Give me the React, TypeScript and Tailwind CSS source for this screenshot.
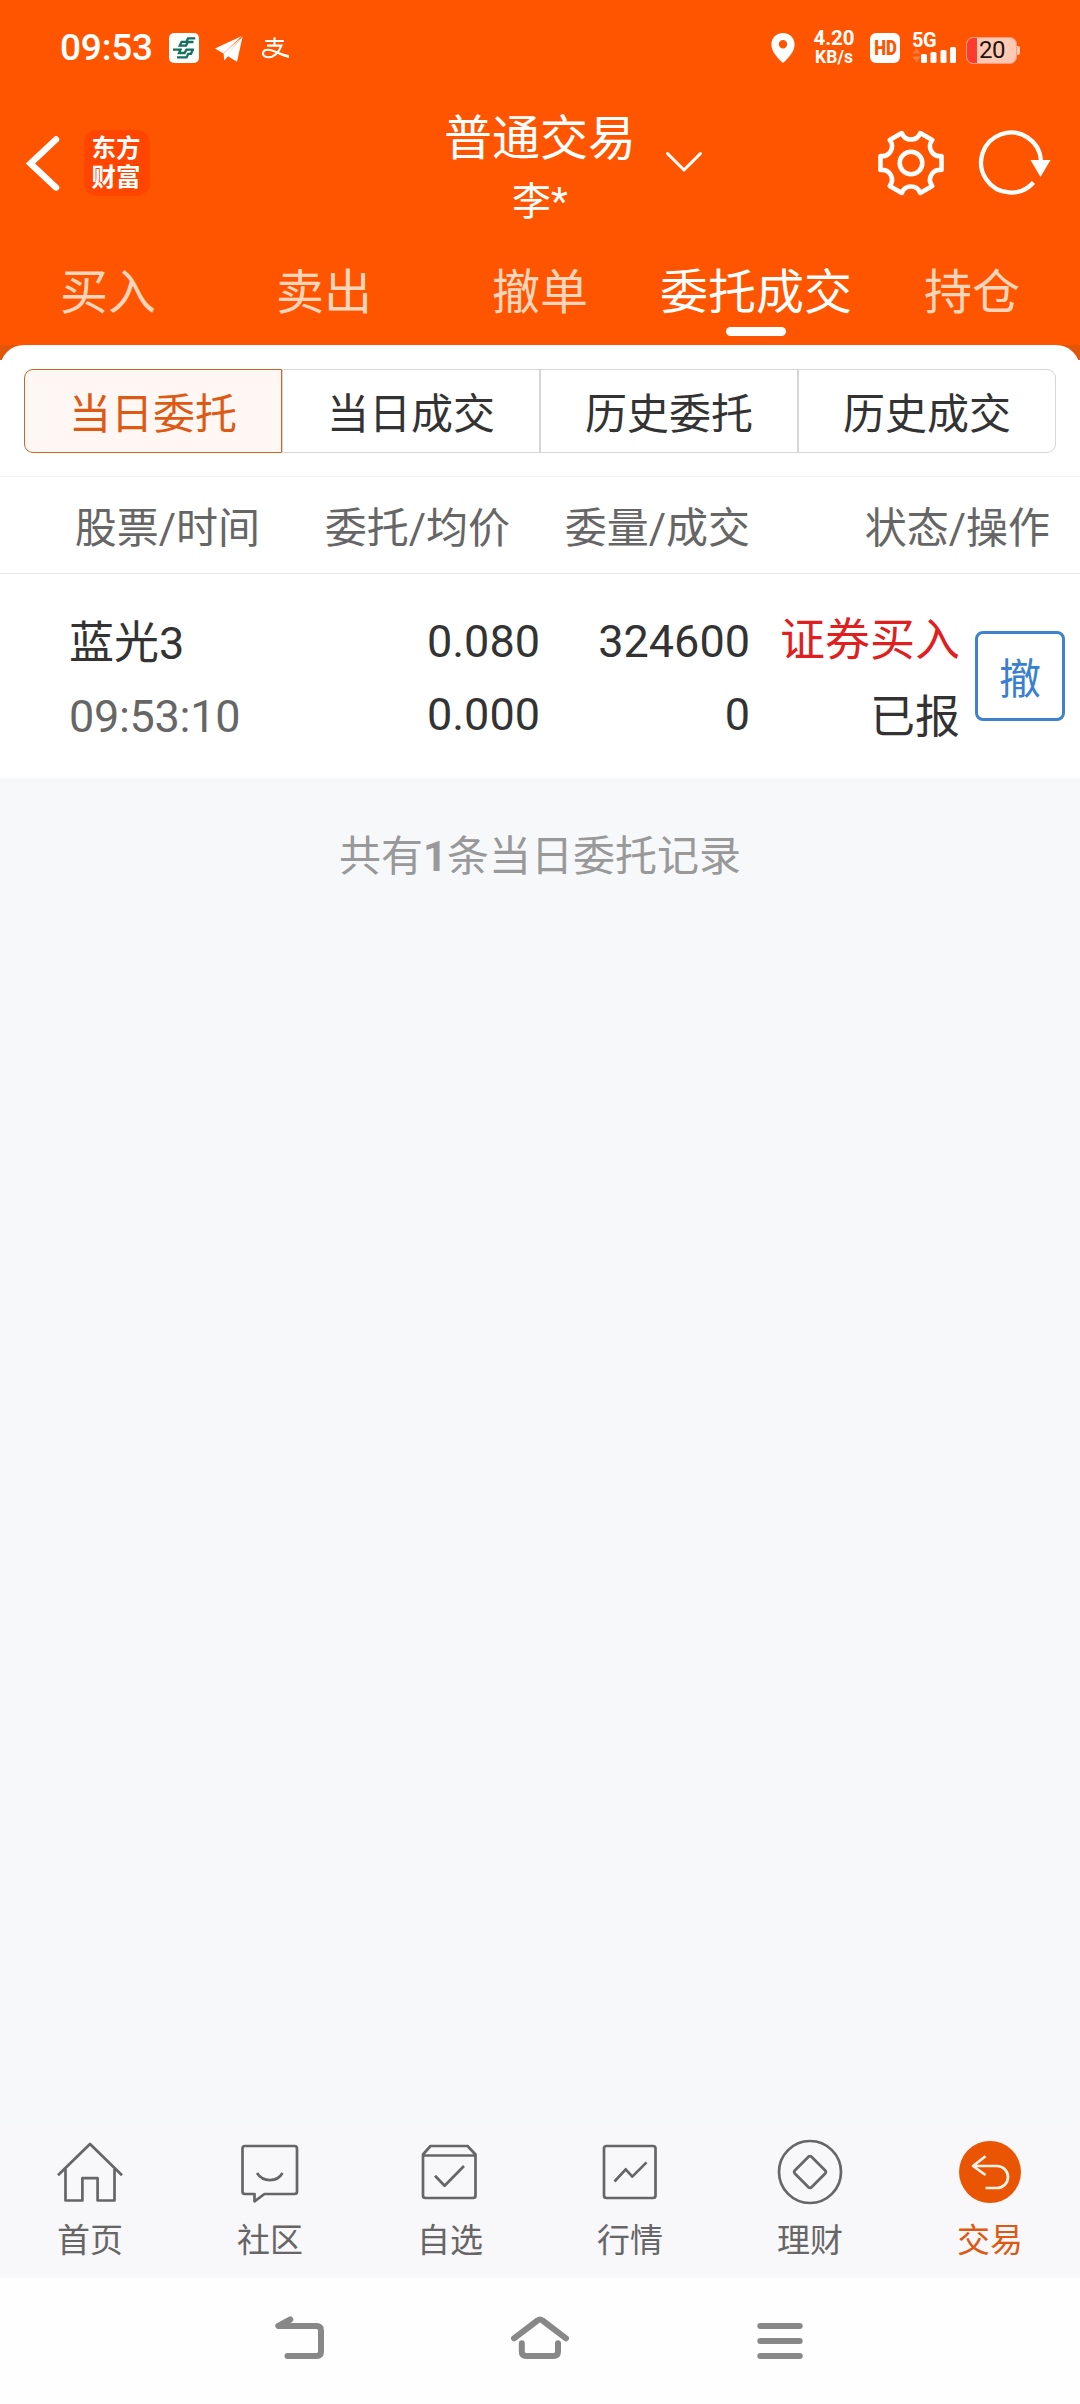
import React from "react";

const FONT = "font-['Roboto','Noto_Sans_CJK_SC',sans-serif]";

function PostLogo() {
  return (
    <svg width="30" height="30" viewBox="0 0 30 30" className="ml-[15px]">
      <rect width="30" height="30" rx="5" fill="#fff" />
      <g fill="none" stroke="#12705c" strokeWidth="2.3">
        <path d="M26.2 5.4H19L17.400 8.800H12.600L10.800 12.600H17L18.800 9H24.500" />
        <path d="M4 16.600H11.500L10 20H15.600L17.400 16.600H25" />
        <path d="M8 24.400H17.600L19.200 20.800H22L23.600 17" />
      </g>
    </svg>
  );
}

function PlaneIcon() {
  return (
    <svg width="30" height="30" viewBox="0 0 30 30" className="ml-[15px]" fill="#fff">
      <path d="M1 15.5L27.8 3 9.5 20.5Z" />
      <path d="M28.6 3.4L23 28.8 14 23.2 10.3 27.5 9.6 20.6 26.5 5.2 13 22Z" />
    </svg>
  );
}

function AlipayIcon() {
  return (
    <svg
      width="30"
      height="30"
      viewBox="0 0 30 30"
      className="ml-[16px]"
      fill="none"
      stroke="#fff"
      strokeWidth="2.1"
    >
      <path d="M5.2 8h18.6M14.5 4.2v8.6M7 12.6h14.4c-1.8 4.6-5.7 11.600-13 11.600-3.400 0-5.400-1.600-5.400-3.700 0-2.200 2.100-3.700 5-3.700 5.600 0 10.300 4.500 20.700 6.200" />
      <path d="M17 18.300c4 2 7.500 3.400 12 4.400v2.200c-5-1-10-3.500-13.500-5.500z" fill="#fff" stroke="none" />
    </svg>
  );
}

function StatusBar() {
  return (
    <div className="flex h-24 items-center pl-[60px] pr-[60px] text-white">
      <span className="w-[94px] text-[37px] font-medium leading-[36px] tracking-[-0.2px]">09:53</span>
      <PostLogo />
      <PlaneIcon />
      <AlipayIcon />
      <div className="flex-1" />
      <svg width="24" height="30" viewBox="0 0 24 30">
        <path
          fillRule="evenodd"
          fill="#fff"
          d="M12 0C5.200 0 .4 5.100.4 11.500.4 18.500 6 24.500 12 30c6-5.500 11.600-11.500 11.600-18.500C23.600 5.100 18.800 0 12 0Zm0 7a4.200 4.200 0 1 1 0 8.400A4.200 4.200 0 0 1 12 7Z"
        />
      </svg>
      <div className="ml-[17px] flex w-[44px] flex-col items-center font-bold">
        <span className="text-[20.5px] leading-[19px]">4.20</span>
        <span className="text-[17.5px] leading-[19px]">KB/s</span>
      </div>
      <div className="ml-[14px] flex h-[30px] w-[30px] items-center justify-center rounded-[6px] bg-white text-[20px] font-black leading-none text-[#ff5500]">
        <span className="inline-block scale-x-[0.84]">HD</span>
      </div>
      <div className="ml-[12px] flex h-[30px] w-[46px] flex-col">
        <span className="h-[14px] text-[20px] font-bold leading-[15px] tracking-[-0.5px]">5G</span>
        <svg width="46" height="18" viewBox="0 0 46 18" className="shrink-0" fill="#fff">
          <path d="M0 6.500L4.500 1.500 9 6.500ZM0 9.500L4.500 15 9 9.500Z" fill="#ff7a3c" />
          <rect x="9" y="7" width="6" height="9" rx="1.5" />
          <rect x="18.500" y="5" width="6" height="11" rx="1.5" />
          <rect x="28.500" y="3" width="6" height="13" rx="1.5" />
          <rect x="38" y="0" width="6" height="16" rx="1.5" />
        </svg>
      </div>
      <div className="ml-[8px] mt-[4px] flex items-center">
        <div className="flex h-[27px] w-[51px] items-center overflow-hidden rounded-[7px] border border-[#ff9a80] bg-[#ffc9b3]">
          <div className="h-full w-[10px] bg-[#ff3b30]" />
          <span className="ml-[2px] text-[24px] leading-[27px] tracking-[-0.5px] text-[#1c1410]">20</span>
        </div>
        <div className="h-[9px] w-[3px] rounded-r-[2px] bg-[#ffc9b3]" />
      </div>
    </div>
  );
}

function TitleBar() {
  return (
    <div className="flex h-[134px] pl-[24px] pr-[27px] text-white">
      <div className="flex w-[420px] pt-[34px]">
        <svg width="40" height="66" viewBox="0 0 40 66" fill="none" stroke="#fff" strokeWidth="6.500">
          <path d="M32 9.500L6.500 33.500 32 57.500" strokeLinecap="round" />
        </svg>
        <div className="ml-[20px] flex h-[66px] w-[66px] flex-col items-center justify-center rounded-[13px] bg-[#ff4500] pr-[2px] text-[24.5px] font-bold leading-[29px]">
          <span>东方</span>
          <span>财富</span>
        </div>
      </div>
      <div className="flex w-[192px] flex-col items-center pt-[14px]">
        <span className="whitespace-nowrap text-[48px] leading-[58px]">普通交易</span>
        <span className="mt-[11px] text-[39px] leading-[46px]">李*</span>
      </div>
      <svg
        width="40"
        height="24"
        viewBox="0 0 40 24"
        className="ml-[28px] mt-[53px]"
        fill="none"
        stroke="#fff"
        strokeWidth="3"
        strokeLinecap="round"
      >
        <path d="M3.500 4.500L20 21 36.500 4.500" />
      </svg>
      <div className="flex-1" />
      <svg
        width="68"
        height="68"
        viewBox="-34 -34 68 68"
        className="mt-[33px]"
        fill="none"
        stroke="#fff"
        strokeWidth="4.600"
        strokeLinejoin="round"
      >
        <path d="M30.500 -7V7A9.800 9.800 0 0 0 21.300 22.900L9.200 29.900A9.800 9.800 0 0 0 -9.200 29.900L-21.300 22.900A9.800 9.800 0 0 0 -30.500 7V-7A9.800 9.800 0 0 0 -21.300 -22.900L-9.200 -29.900A9.800 9.800 0 0 0 9.200 -29.900L21.300 -22.900A9.800 9.800 0 0 0 30.500 -7Z" />
        <circle r="11.300" />
      </svg>
      <svg width="76" height="68" viewBox="-34 -34 76 68" className="ml-[32px] mt-[33px]">
        <path d="M30 -3A30 30 0 1 0 22.500 19.500" fill="none" stroke="#fff" strokeWidth="4.300" />
        <path d="M19.500 -3H39.500L29.500 14Z" fill="#fff" />
      </svg>
    </div>
  );
}

const tabs = ["买入", "卖出", "撤单", "委托成交", "持仓"];

function MainTabs() {
  return (
    <div className="flex h-[115px]">
      {tabs.map((tab) => {
        const active = tab === "委托成交";
        return (
          <div key={tab} className="flex w-[216px] flex-col items-center pt-[33px]">
            <span className={`text-[48px] leading-[60px] ${active ? "text-white" : "text-[#ffd5bc]"}`}>{tab}</span>
            {active && <div className="mt-[4px] h-[9px] w-[60px] rounded-[5px] bg-white" />}
          </div>
        );
      })}
    </div>
  );
}

const segments = ["当日委托", "当日成交", "历史委托", "历史成交"];

function Segments() {
  return (
    <div className="flex h-[117px] border-b border-[#f2f2f3] bg-white px-6 pt-[9px]">
      {segments.map((s, i) => (
        <div
          key={s}
          className={`flex h-[84px] w-[258px] items-center justify-center border pt-[7px] text-[42px] leading-[50px] ${
            i === 0
              ? "rounded-l-[9px] border-[#cd6428] bg-[#fff7f3] text-[#dd5a14]"
              : "border-[#d4d6d8] bg-white text-[#333333]"
          } ${i === 3 ? "rounded-r-[9px]" : ""}`}
        >
          {s}
        </div>
      ))}
    </div>
  );
}

function TableHead() {
  return (
    <div className="flex h-[97px] items-center border-b border-[#e9e9ea] bg-white pt-[7px] text-right text-[42px] leading-[50px] text-[#666666]">
      <div className="w-[260px]">股票/时间</div>
      <div className="w-[250px]">委托/均价</div>
      <div className="w-[240px]">委量/成交</div>
      <div className="w-[300px]">状态/操作</div>
    </div>
  );
}

function OrderRow() {
  return (
    <div className="flex h-[204px] bg-white text-[45px] leading-[54px] text-[#333333]">
      <div className="w-[270px] pl-[69px] pt-[43px]">
        <div>蓝光3</div>
        <div className="mt-[19px] tracking-[-0.3px] text-[#666666]">09:53:10</div>
      </div>
      <div className="w-[270px] pt-[41px] text-right">
        <div>0.080</div>
        <div className="mt-[19px]">0.000</div>
      </div>
      <div className="w-[210px] pt-[41px] text-right">
        <div>324600</div>
        <div className="mt-[19px]">0</div>
      </div>
      <div className="w-[210px] pt-[40px] text-right">
        <div className="text-[#e02020]">证券买入</div>
        <div className="mt-[23px]">已报</div>
      </div>
      <div className="ml-[15px] mt-[57px] flex h-[90px] w-[90px] items-center justify-center rounded-[8px] border-[3px] border-[#3f82cc] pt-[7px] text-[42px] text-[#3a80d0]">
        撤
      </div>
    </div>
  );
}

const icons: Record<string, React.ReactNode> = {
  首页: (
    <>
      <path d="M-32 3.300L0 -28 32 3.300" />
      <path d="M-24.500 -3V28.500H-7.600V6.200H7.600V28.500H24.500V-3" />
    </>
  ),
  社区: (
    <>
      <path d="M-25 -26H24.500Q27 -26 27 -23.500V19.500Q27 22 24.500 22H-5.500L-15.500 29.300V22H-25Q-27.500 22 -27.500 19.500V-23.500Q-27.500 -26 -25 -26Z" />
      <path d="M-13 1C-7 10.500 7 10.500 12.500 1" />
    </>
  ),
  自选: (
    <>
      <path d="M-19.500 -26H17.500L25.500 -17.500V23.500Q25.500 26 23 26H-24.500Q-27 26 -27 23.500V-17.500Z" />
      <path d="M-27 -16.500H25.500M-15 3.700L-5.400 13.700 14 -6" />
    </>
  ),
  行情: (
    <>
      <rect x="-26" y="-26" width="51.500" height="52" rx="2.500" />
      <path d="M-15.500 9.500L-4.300 -2.700 2.300 4.600 16.500 -9.600" />
    </>
  ),
  理财: (
    <>
      <circle r="31" />
      <path d="M-1.500 -15.200Q0 -16.700 1.500 -15.200L15.200 -1.500Q16.500 0 15.200 1.500L1.500 15.200Q0 16.700 -1.500 15.200L-15.200 1.500Q-16.500 0 -15.200 -1.500Z" />
    </>
  ),
  交易: (
    <>
      <circle r="31" fill="#ea5504" stroke="none" />
      <path d="M-4.500 -15.700L-17 -6 -4.500 3M-17 -6H7A11 11 0 0 1 7 16H-4.500" stroke="#fff3e8" />
    </>
  ),
};

function BottomNav() {
  return (
    <div className="flex h-[155px] bg-[#f8f8fb]">
      {Object.keys(icons).map((name) => (
        <div
          key={name}
          className={`flex w-[180px] flex-col items-center pt-[15px] ${name === "交易" ? "text-[#dd5a14]" : "text-[#666666]"}`}
        >
          <svg width="68" height="68" viewBox="-34 -34 68 68" fill="none" stroke="#666668" strokeWidth="2.700" strokeLinejoin="round">
            {icons[name]}
          </svg>
          <span className="mt-[15px] text-[33px] leading-[40px]">{name}</span>
        </div>
      ))}
    </div>
  );
}

function SystemNav() {
  return (
    <div className="flex h-[126px] items-start justify-center gap-[180px] bg-[#fefefe] pt-[29px]">
      {[
        <path key="back" d="M20.300 12.500L8.300 19H46.500Q51 19 51 23.500V44.500Q51 49 46.500 49H17.500" />,
        <path key="home" d="M4 31.300L27.500 13.500Q30 11.500 32.500 13.500L56 31.300M11.800 36.300V44.500Q11.800 49 16.300 49H43.500Q48 49 48 44.500V36.300" />,
        <path key="menu" d="M10.300 19H49.700M10.300 34H49.700M10.300 49H49.700" />,
      ].map((shape, i) => (
        <svg
          key={i}
          width="60"
          height="60"
          viewBox="0 0 60 60"
          fill="none"
          stroke="#888888"
          strokeWidth="6"
          strokeLinecap="round"
          strokeLinejoin="round"
        >
          {shape}
        </svg>
      ))}
    </div>
  );
}

export default function App() {
  return (
    <div className={`flex h-[2404px] w-[1080px] flex-col bg-[#f7f8fa] ${FONT}`}>
      <div className="h-[345px] bg-[#ff5500]">
        <StatusBar />
        <TitleBar />
        <MainTabs />
      </div>
      <div className="h-[15px] overflow-hidden bg-[#e2560a]">
        <div className="h-[40px] rounded-t-[24px] bg-white" />
      </div>
      <Segments />
      <TableHead />
      <OrderRow />
      <div className="mt-[54px] text-center text-[42px] leading-[50px] text-[#999999]">
        共有<span className="font-bold">1</span>条当日委托记录
      </div>
      <div className="flex-1" />
      <BottomNav />
      <SystemNav />
    </div>
  );
}
